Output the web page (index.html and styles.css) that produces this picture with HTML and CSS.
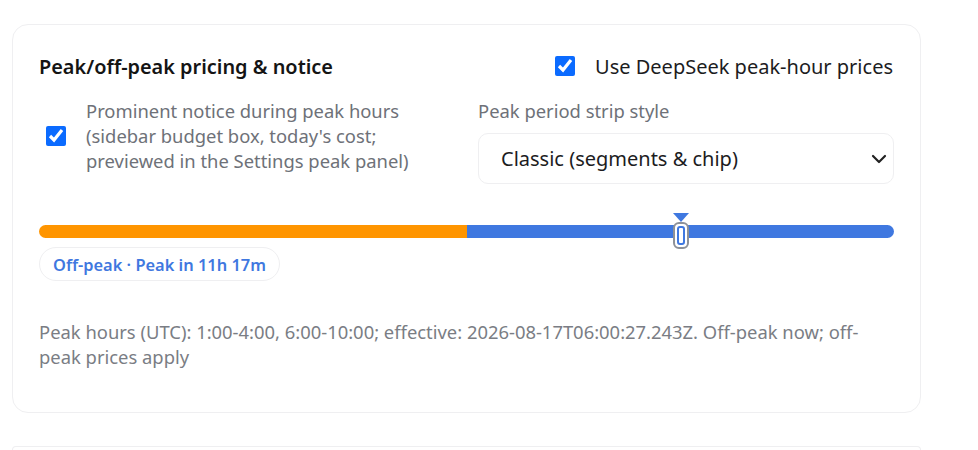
FILE: index.html
```html
<!DOCTYPE html>
<html lang="en">
<head>
<meta charset="utf-8">
<title>Peak pricing</title>
<link rel="stylesheet" href="styles.css">
</head>
<body>
<section class="card">
  <div class="head">
    <h2 class="title">Peak/off-peak pricing &amp; notice</h2>
    <label class="check check-main">
      <input type="checkbox" checked>
      <span>Use DeepSeek peak-hour prices</span>
    </label>
  </div>
  <div class="cols">
    <label class="check check-notice">
      <input type="checkbox" checked>
      <span>Prominent notice during peak hours (sidebar budget box, today's cost; previewed in the Settings peak panel)</span>
    </label>
    <div class="field">
      <div class="field-label">Peak period strip style</div>
      <div class="select">
        <span>Classic (segments &amp; chip)</span>
        <svg class="chev" width="16" height="10" viewBox="0 0 16 10"><path d="M2 2 L8 8 L14 2" fill="none" stroke="#222" stroke-width="2.2" stroke-linecap="round" stroke-linejoin="round"/></svg>
      </div>
    </div>
  </div>
  <div class="strip">
    <div class="bar">
      <div class="seg seg-off" style="width:50.06%"></div>
      <div class="seg seg-on"></div>
    </div>
    <div class="marker" style="left:634px">
      <svg class="tri" width="16" height="9" viewBox="0 0 16 9"><path d="M0 0 H16 L8 9 Z" fill="#3f78e0"/></svg>
      <div class="handle"><div class="handle-in"></div></div>
    </div>
  </div>
  <div class="chip">Off-peak · Peak in 11h 17m</div>
  <p class="note">Peak hours (UTC): 1:00-4:00, 6:00-10:00; effective: 2026-08-17T06:00:27.243Z. Off-peak now; off-peak prices apply</p>
</section>
<section class="card card-next"></section>
</body>
</html>
```
FILE: styles.css
```css
html, body {
  margin: 0;
  padding: 0;
  background: #ffffff;
}
body {
  font-family: "Noto Sans", "Open Sans", "Liberation Sans", sans-serif;
  color: #1c1c1e;
  padding: 24px 0 0 12px;
}
.card {
  box-sizing: border-box;
  width: 909px;
  border: 1px solid #efeff1;
  border-radius: 16px;
  padding: 26px 26px 43px 26px;
  background: #fff;
}
.card-next {
  margin-top: 33px;
  height: 4px;
  padding: 0;
  border-bottom: 0;
  border-radius: 16px 16px 0 0;
}
.head {
  display: flex;
  justify-content: space-between;
  align-items: center;
  height: 30px;
}
.title {
  margin: 0;
  font-size: 19.9px;
  font-weight: 600;
  color: #141414;
}
.check {
  display: flex;
  align-items: center;
}
.check input {
  width: 20px;
  height: 20px;
  margin: 0;
  accent-color: #0b6bff;
  flex: none;
}
.check-main {
  gap: 20px;
  font-size: 20px;
  color: #1c1c1e;
  margin-right: 1px;
}
.cols {
  display: grid;
  grid-template-columns: 413px 416px;
  column-gap: 26px;
  margin-top: 17px;
}
.check-notice {
  gap: 20px;
  align-items: center;
  padding-left: 7px;
  font-size: 18.4px;
  line-height: 25px;
  color: #6e7178;
  height: 75px;
}
.field-label {
  font-size: 18.4px;
  line-height: 25px;
  color: #6e7178;
}
.select {
  box-sizing: border-box;
  margin-top: 10px;
  height: 51px;
  border: 1px solid #efeff1;
  border-radius: 10px;
  display: flex;
  align-items: center;
  justify-content: space-between;
  padding: 0 6px 0 22px;
  font-size: 20px;
  color: #1c1c1e;
}
.chev {
  display: block;
}
.strip {
  position: relative;
  margin-top: 41px;
  height: 13px;
}
.bar {
  display: flex;
  height: 13px;
  border-radius: 7px;
  overflow: hidden;
}
.seg-off {
  background: #ff9500;
}
.seg-on {
  flex: 1;
  background: #3f78e0;
}
.marker {
  position: absolute;
  top: -12px;
  width: 16px;
  display: flex;
  flex-direction: column;
  align-items: center;
}
.tri {
  display: block;
}
.handle {
  box-sizing: border-box;
  width: 16px;
  height: 27px;
  border: 2px solid #8d9199;
  border-radius: 6px;
  background: #fff;
  padding: 2px;
}
.handle-in {
  box-sizing: border-box;
  height: 100%;
  border: 2px solid #3f78e0;
  border-radius: 3px;
  background: #fff;
}
.chip {
  display: inline-flex;
  align-items: center;
  box-sizing: border-box;
  height: 34px;
  margin-top: 9px;
  padding: 0 13px;
  border: 1px solid #efeff1;
  border-radius: 17px;
  font-size: 16.4px;
  font-weight: 600;
  color: #3f78e0;
}
.note {
  margin: 38px 0 0 0;
  font-size: 18.4px;
  line-height: 25px;
  color: #7a7d84;
}
```
